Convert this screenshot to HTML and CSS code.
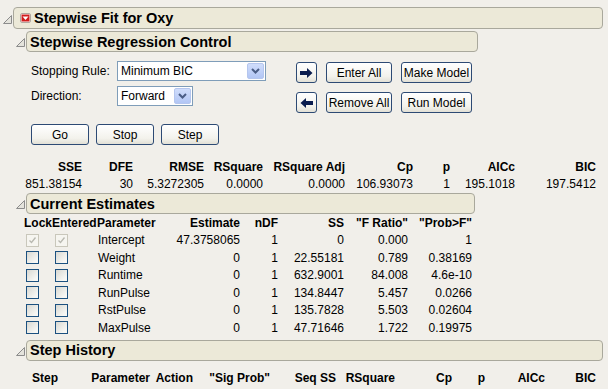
FILE: index.html
```html
<!DOCTYPE html>
<html>
<head>
<meta charset="UTF-8">
<title>Stepwise Fit for Oxy</title>
<link rel="stylesheet" href="styles.css">
</head>
<body>
<div class="report">
	<div class="head">
		<span class="tri"><svg width="9" height="9" viewBox="0 0 9 9"><polygon points="0.5,8.5 8.5,8.5 8.5,0.5" fill="#e4e3dc" stroke="#8c8c8c"/></svg></span>
		<div class="bar bar-top">
			<svg class="menu" width="11" height="10" viewBox="0 0 11 10"><rect x="0.5" y="0.5" width="10" height="9" rx="1.5" fill="#fff" stroke="#b0a8a0"/><rect x="1.5" y="1.5" width="8" height="7" fill="#d01c1c"/><polygon points="2.5,3.5 8.5,3.5 5.5,7" fill="#fff"/></svg>
			<span>Stepwise Fit for Oxy</span>
		</div>
	</div>

	<div class="sections">
		<!-- control -->
		<div class="head">
			<span class="tri"><svg width="9" height="9" viewBox="0 0 9 9"><polygon points="0.5,8.5 8.5,8.5 8.5,0.5" fill="#e4e3dc" stroke="#8c8c8c"/></svg></span>
			<div class="bar bar-ctl">Stepwise Regression Control</div>
		</div>
		<div class="ctl">
			<div class="ctl-left">
				<label>Stopping Rule:</label>
				<div class="sel sel-wide"><span>Minimum BIC</span><span class="drop"><svg width="9" height="6" viewBox="0 0 9 6"><polyline points="1,1 4.5,4.5 8,1" fill="none" stroke="#4a5d86" stroke-width="2"/></svg></span></div>
				<label>Direction:</label>
				<div class="sel sel-narrow"><span>Forward</span><span class="drop"><svg width="9" height="6" viewBox="0 0 9 6"><polyline points="1,1 4.5,4.5 8,1" fill="none" stroke="#4a5d86" stroke-width="2"/></svg></span></div>
			</div>
			<div class="ctl-right">
				<button class="btn btn-icon"><svg width="13" height="10" viewBox="0 0 13 10"><polygon points="0,3 7,3 7,0 12.5,5 7,10 7,7 0,7" fill="#0b1d4f"/></svg></button>
				<button class="btn">Enter All</button>
				<button class="btn">Make Model</button>
				<button class="btn btn-icon"><svg width="13" height="10" viewBox="0 0 13 10"><polygon points="13,3 6,3 6,0 0.5,5 6,10 6,7 13,7" fill="#0b1d4f"/></svg></button>
				<button class="btn">Remove All</button>
				<button class="btn">Run Model</button>
			</div>
		</div>
		<div class="run-row">
			<button class="btn btn-run">Go</button>
			<button class="btn btn-run">Stop</button>
			<button class="btn btn-run">Step</button>
		</div>

		<table class="grid stats">
			<tr><th class="c1">SSE</th><th class="c2">DFE</th><th class="c3">RMSE</th><th class="c4">RSquare</th><th class="c5">RSquare Adj</th><th class="c6">Cp</th><th class="c7">p</th><th class="c8">AICc</th><th class="c9">BIC</th></tr>
			<tr><td>851.38154</td><td>30</td><td>5.3272305</td><td>0.0000</td><td>0.0000</td><td>106.93073</td><td>1</td><td>195.1018</td><td>197.5412</td></tr>
		</table>

		<!-- current estimates -->
		<div class="head head-est">
			<span class="tri"><svg width="9" height="9" viewBox="0 0 9 9"><polygon points="0.5,8.5 8.5,8.5 8.5,0.5" fill="#e4e3dc" stroke="#8c8c8c"/></svg></span>
			<div class="bar bar-est">Current Estimates</div>
		</div>
		<table class="grid est">
			<tr><th class="lock">Lock</th><th class="ent">Entered</th><th class="par">Parameter</th><th class="e1">Estimate</th><th class="e2">nDF</th><th class="e3">SS</th><th class="e4">"F Ratio"</th><th class="e5">"Prob&gt;F"</th></tr>
			<tr><td class="lock"><span class="cb off"><svg width="11" height="11" viewBox="0 0 11 11"><polyline points="2.5,5.5 4.5,7.5 8.5,2.5" fill="none" stroke="#b8b8b0" stroke-width="1.3"/></svg></span></td><td class="ent"><span class="cb off"><svg width="11" height="11" viewBox="0 0 11 11"><polyline points="2.5,5.5 4.5,7.5 8.5,2.5" fill="none" stroke="#b8b8b0" stroke-width="1.3"/></svg></span></td><td class="par">Intercept</td><td>47.3758065</td><td>1</td><td>0</td><td>0.000</td><td>1</td></tr>
			<tr><td class="lock"><span class="cb"></span></td><td class="ent"><span class="cb"></span></td><td class="par">Weight</td><td>0</td><td>1</td><td>22.55181</td><td>0.789</td><td>0.38169</td></tr>
			<tr><td class="lock"><span class="cb"></span></td><td class="ent"><span class="cb"></span></td><td class="par">Runtime</td><td>0</td><td>1</td><td>632.9001</td><td>84.008</td><td>4.6e-10</td></tr>
			<tr><td class="lock"><span class="cb"></span></td><td class="ent"><span class="cb"></span></td><td class="par">RunPulse</td><td>0</td><td>1</td><td>134.8447</td><td>5.457</td><td>0.0266</td></tr>
			<tr><td class="lock"><span class="cb"></span></td><td class="ent"><span class="cb"></span></td><td class="par">RstPulse</td><td>0</td><td>1</td><td>135.7828</td><td>5.503</td><td>0.02604</td></tr>
			<tr><td class="lock"><span class="cb"></span></td><td class="ent"><span class="cb"></span></td><td class="par">MaxPulse</td><td>0</td><td>1</td><td>47.71646</td><td>1.722</td><td>0.19975</td></tr>
		</table>

		<!-- step history -->
		<div class="head head-hist">
			<span class="tri"><svg width="9" height="9" viewBox="0 0 9 9"><polygon points="0.5,8.5 8.5,8.5 8.5,0.5" fill="#e4e3dc" stroke="#8c8c8c"/></svg></span>
			<div class="bar">Step History</div>
		</div>
		<table class="grid hist">
			<tr><th class="h1">Step</th><th class="h2">Parameter</th><th class="h3">Action</th><th class="h4">"Sig Prob"</th><th class="h5">Seq SS</th><th class="h6">RSquare</th><th class="h7">Cp</th><th class="h8">p</th><th class="h9">AICc</th><th class="h10">BIC</th></tr>
		</table>
	</div>
</div>
</body>
</html>
```

FILE: styles.css
```css
* {
	margin: 0;
	padding: 0;
	box-sizing: border-box;
}
body {
	background: #f1efea;
	font: 12px "Liberation Sans", Arial, sans-serif;
	color: #000;
	padding: 7px 5px 0 3px;
}
.head {
	display: flex;
	align-items: center;
}
.tri {
	width: 10px;
	flex: none;
	display: flex;
	align-items: center;
	padding-top: 2px;
}
.bar {
	flex: 1;
	height: 21px;
	background: #ece9d8;
	border: 1px solid #a9a89c;
	border-radius: 4px;
	display: flex;
	align-items: center;
	padding-left: 3px;
	font-weight: bold;
	font-size: 14.5px;
}
.bar-top {
	height: 22px;
	padding-left: 6px;
}
.menu {
	margin-right: 3px;
	flex: none;
}
.bar-ctl {
	flex: none;
	width: 452px;
}
.bar-est {
	flex: none;
	width: 449px;
}
.sections {
	margin-left: 13px;
}
.sections > .head:first-child {
	margin-top: 2px;
}

/* control panel */
.ctl {
	display: flex;
	padding-left: 15px;
	margin-top: 9px;
}
.ctl-left {
	width: 265px;
	display: grid;
	grid-template-columns: 86px auto;
	row-gap: 5px;
	align-items: center;
	align-content: start;
}
.sel {
	height: 20px;
	border: 1px solid #7f9db9;
	background: #fff;
	display: flex;
	align-items: center;
	justify-content: space-between;
	padding-left: 3px;
}
.sel-wide {
	width: 149px;
}
.sel-narrow {
	width: 76px;
}
.drop {
	width: 17px;
	height: 16px;
	margin-right: 1px;
	border-radius: 2px;
	background: linear-gradient(#d0ddfb, #b2c6f5);
	border: 1px solid #b5c6ee;
	display: flex;
	align-items: center;
	justify-content: center;
}
.ctl-right {
	margin-top: 1px;
	display: grid;
	grid-template-columns: 21px 66px 71px;
	column-gap: 9px;
	row-gap: 9px;
}
.btn {
	height: 21px;
	border: 1px solid #2d4a74;
	border-radius: 3px;
	background: linear-gradient(#ffffff, #f3f2ec 70%, #e2e0d6);
	font: 12px "Liberation Sans", Arial, sans-serif;
	color: #000;
	white-space: nowrap;
	padding: 0;
}
.btn-icon {
	display: flex;
	align-items: center;
	justify-content: center;
}
.run-row {
	display: flex;
	gap: 7px;
	padding-left: 15px;
	margin-top: 11px;
}
.btn-run {
	width: 58px;
}

/* tables */
.grid {
	border-collapse: collapse;
	table-layout: fixed;
}
.grid th,
.grid td {
	padding: 0;
	height: 17px;
	text-align: right;
	white-space: nowrap;
	overflow: visible;
}
.grid th {
	font-weight: bold;
}
.stats {
	width: 580px;
	margin-top: 13px;
	margin-bottom: 1px;
}
.stats .c1 { width: 66px; }
.stats .c2 { width: 51px; }
.stats .c3 { width: 71px; }
.stats .c4 { width: 59px; }
.stats .c5 { width: 82px; }
.stats .c6 { width: 68px; }
.stats .c7 { width: 37px; }
.stats .c8 { width: 65px; }
.stats .c9 { width: 81px; }

.est {
	width: 448px;
	margin-left: 8px;
}
.est th,
.est td {
	height: 17.5px;
}
.est .lock { width: 28px; text-align: left; }
.est .ent { width: 45px; text-align: left; }
.est .par { width: 73px; text-align: left; }
.est .e1 { width: 70px; }
.est .e2 { width: 38px; }
.est .e3 { width: 66px; }
.est .e4 { width: 64px; }
.est .e5 { width: 64px; }
.est td.lock .cb { margin-left: 2px; }
.est td.ent .cb { margin-left: 3px; }
.est td.par { padding-left: 1px; }
.cb {
	display: block;
	width: 13px;
	height: 13px;
	border: 1px solid #1c5180;
	background: linear-gradient(135deg, #d8d8d2, #f7f7f4 80%);
}
.cb.off {
	border-color: #c9c7bb;
	background: #f6f5f0;
}
.cb svg {
	display: block;
}

.head-hist {
	margin-top: 3px;
}
.hist {
	width: 580px;
	margin-top: 9px;
}
.hist .h1 { width: 42px; }
.hist .h2 { width: 92px; }
.hist .h3 { width: 43px; }
.hist .h4 { width: 77px; }
.hist .h5 { width: 66px; }
.hist .h6 { width: 59px; }
.hist .h7 { width: 57px; }
.hist .h8 { width: 33px; }
.hist .h9 { width: 60px; }
.hist .h10 { width: 51px; }
```
